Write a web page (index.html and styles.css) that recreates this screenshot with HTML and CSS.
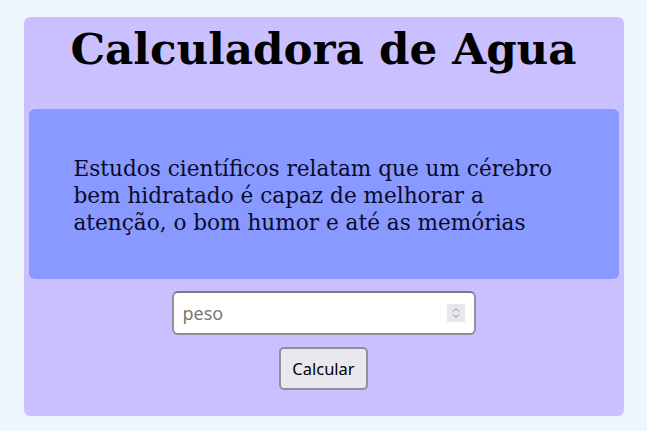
FILE: index.html
```html
<!DOCTYPE html>
<html lang="pt">
<head>
<meta charset="utf-8">
<title>Calculadora de Agua</title>
<link rel="stylesheet" href="styles.css">
</head>
<body>
<main class="card">
  <h1 class="title">Calculadora de Agua</h1>
  <section class="info">
    <p class="info-text">Estudos científicos relatam que um cérebro bem hidratado é capaz de melhorar a atenção, o bom humor e até as memórias</p>
  </section>
  <form class="form">
    <div class="field">
      <input class="weight" type="text" placeholder="peso">
      <span class="spin">
        <svg width="8" height="12" viewBox="0 0 8 12"><path d="M1 4.5 L4 1.5 L7 4.5 M1 7.5 L4 10.5 L7 7.5" fill="none" stroke="#8a8a8a" stroke-width="1"/></svg>
      </span>
    </div>
    <button class="btn" type="button">Calcular</button>
  </form>
</main>
</body>
</html>
```
FILE: styles.css
```css
html, body {
  margin: 0;
  padding: 0;
}
body {
  background: #f0f6fd;
  font-family: "DejaVu Serif", serif;
  padding-top: 17px;
  height: 431px;
  box-sizing: border-box;
}
.card {
  width: 600px;
  margin: 0 auto;
  background: #cbc0ff;
  border-radius: 6px;
  padding: 5px 5px 26px;
  box-sizing: border-box;
  height: 399px;
}
.title {
  margin: 0;
  padding-top: 2px;
  height: 85px;
  font-size: 43.6px;
  font-weight: bold;
  text-align: center;
  color: #000;
  line-height: 50px;
}
.info {
  background: #8899ff;
  border-radius: 6px;
  height: 170px;
  display: flex;
  align-items: center;
  padding: 2px 45px 0;
  box-sizing: border-box;
}
.info-text {
  margin: 0;
  font-size: 21.6px;
  line-height: 27px;
  color: #0a0a2a;
}
.form {
  display: flex;
  flex-direction: column;
  align-items: center;
  gap: 12px;
  margin-top: 12px;
}
.field {
  position: relative;
  width: 304px;
  height: 44px;
}
.weight {
  width: 100%;
  height: 100%;
  box-sizing: border-box;
  border: 2px solid #8f8f9d;
  border-top-color: #7a7a86;
  border-radius: 6px;
  background: #fff;
  padding: 0 9px;
  font-family: "Noto Sans", sans-serif;
  font-size: 18px;
  color: #222;
  outline: none;
}
.weight::placeholder {
  color: #777;
}
.spin {
  position: absolute;
  right: 11px;
  top: 13px;
  width: 18px;
  height: 18px;
  background: #e8e8ec;
  display: flex;
  align-items: center;
  justify-content: center;
}
.btn {
  width: 89px;
  height: 43px;
  border: 2px solid #8f8f9d;
  border-radius: 5px;
  background: #e9e9ed;
  font-family: "Noto Sans", sans-serif;
  font-size: 16.5px;
  color: #000;
  padding: 0;
}
```
